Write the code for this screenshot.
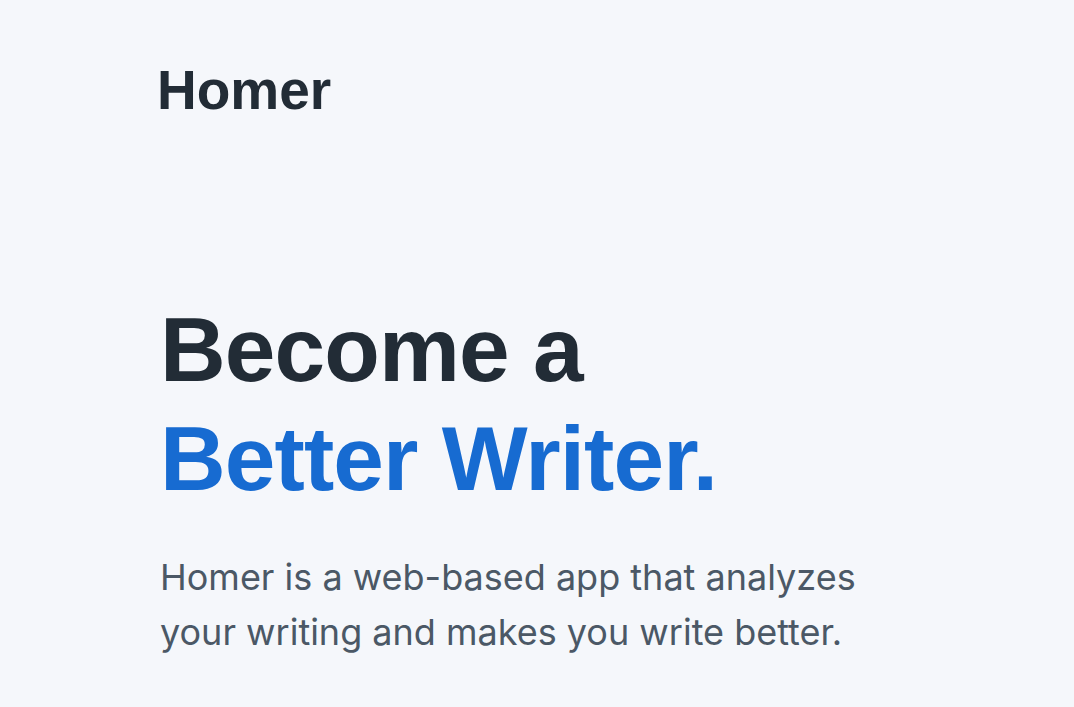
import React from 'react';

const App = () => {
  return (
    <div className="min-h-screen w-full bg-[#f5f7fb] overflow-hidden">
      <div className="pl-[157px] pt-[58px]">
        <header>
          <span className="block text-[55px] leading-[64px] font-bold text-[#222c36] font-['Liberation_Sans',Arial,sans-serif]">
            Homer
          </span>
        </header>

        <main className="pt-[173px] pl-[3px]">
          <h1 className="text-[91px] leading-[109px] font-bold tracking-[-0.01em] text-[#222c36] font-['Liberation_Sans',Arial,sans-serif]">
            Become a
            <br />
            <span className="text-[#176bd1]">Better Writer.</span>
          </h1>
          <p className="mt-[37px] max-w-[760px] text-[36px] leading-[55px] text-[#4b5866] font-['Inter',sans-serif]">
            Homer is a web-based app that analyzes
            <br />
            your writing and makes you write better.
          </p>
        </main>
      </div>
    </div>
  );
};

export default App;
